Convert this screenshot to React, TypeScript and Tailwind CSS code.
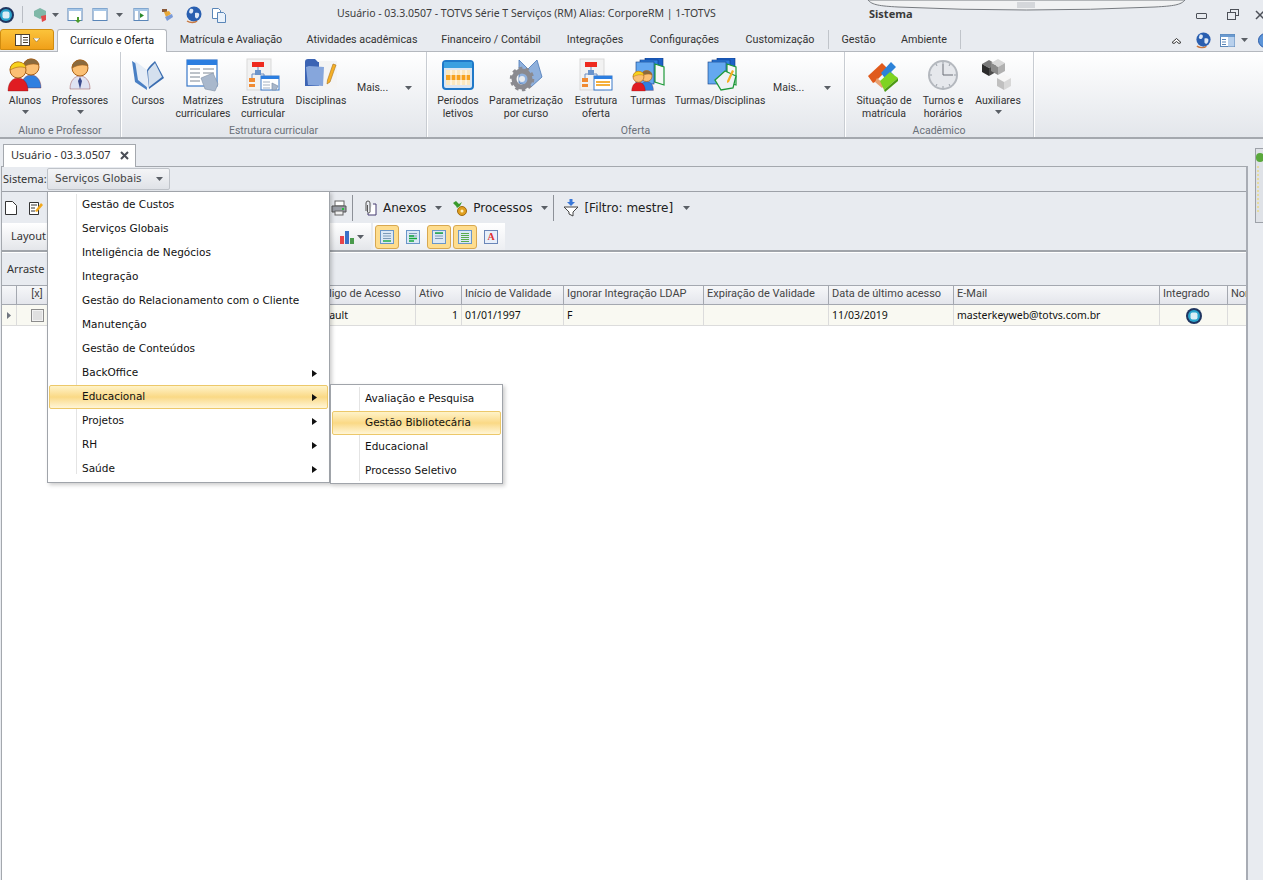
import React from 'react';

const Caret = ({ className = 'mx-auto' }: { className?: string }) => (
  <svg width="7" height="4" viewBox="0 0 7 4" className={className}>
    <path d="M0 0h7L3.500 4z" fill="#5a5f66" />
  </svg>
);

const Person = ({ x, y, hair, body, tie }: { x: number; y: number; hair: string; body: string; tie?: boolean }) => (
  <g transform={`translate(${x} ${y})`}>
    <path d="M1 30c0-9 5-13 10-13s10 4 10 13z" fill={body} stroke="#7a1010" strokeOpacity=".35" />
    {tie && <path d="M11 18l-2 4 2 8 2-8z" fill="#3a4a8c" />}
    <circle cx="11" cy="9" r="8" fill="#fbbf73" stroke="#a8621a" />
    <path d="M3.200 9C3 4 7 1 11 1s7.500 2 8 6C14 5 8 6 3.200 9z" fill={hair} stroke="#a8621a" strokeWidth=".6" />
  </g>
);

const AlunosIcon = () => (
  <svg width="36" height="34" viewBox="0 0 36 34">
    <Person x={13} y={0} hair="#8a6a3e" body="#2f7fe0" />
    <Person x={0} y={3} hair="#f7d21f" body="#e01c22" />
  </svg>
);
const ProfIcon = () => (
  <svg width="34" height="34" viewBox="0 0 34 34">
    <Person x={6} y={1} hair="#8a6a3e" body="#dfe2f2" tie />
  </svg>
);
const BookIcon = () => (
  <svg width="34" height="34" viewBox="0 0 34 34">
    <path d="M1 3l14 9 1 20L4 24z" fill="#4a80c4" />
    <path d="M4 3l12 9 1 18L7 22z" fill="#e4ecf6" />
    <path d="M16 12c2-4 6-7 8-9l9 17-15 11z" fill="#3a6db0" />
    <path d="M17 13c2-3 5-6 7-8l7 14-13 10z" fill="#d4e0ee" />
  </svg>
);
const MatrizIcon = () => (
  <svg width="34" height="34" viewBox="0 0 34 34">
    <rect x="1" y="2" width="30" height="26" fill="#fff" stroke="#3a78c8" strokeWidth="1.200" />
    <rect x="1" y="2" width="30" height="5" fill="#2c7ee0" />
    <path d="M4 11h10M4 15h10M4 19h10M4 23h10M17 11h11M17 15h11" stroke="#7c8794" />
    <path d="M15 20l12-5 5 11-3 7-10-2z" fill="#a9b8cc" stroke="#8090a6" strokeWidth=".6" />
  </svg>
);
const TreeIcon = ({ alt }: { alt?: boolean }) => (
  <svg width="34" height="34" viewBox="0 0 34 34">
    <rect x="1" y="1" width="24" height="31" fill="#f2f2f2" stroke="#d9d9d9" />
    <rect x="6" y="4" width="12" height="5" fill="#ee2a1e" />
    <path d="M12 9v5M6 20v-4h12v4" stroke="#6a8cc0" fill="none" />
    <rect x="9" y="12" width="6" height="5" fill="#6a94cc" />
    <rect x="3" y="20" width="6" height="4" fill="#f08a32" />
    <rect x="3" y="26" width="6" height="3" fill="#f08a32" />
    <rect x="15" y="18" width="18" height="14" fill="#fff" stroke="#3a78c8" />
    <rect x="15" y="18" width="18" height="3" fill="#2c7ee0" />
    {alt ? (
      <path d="M17 24h14M17 27h14" stroke="#f5b03c" strokeWidth="2" />
    ) : (
      <path d="M17 24h7M17 27h7M17 30h7M26 25l6 3-2 4h-4z" stroke="#8090a6" fill="#a9b8cc" strokeWidth=".7" />
    )}
  </svg>
);
const FolderIcon = () => (
  <svg width="34" height="34" viewBox="0 0 34 34">
    <path d="M1 4c0-2 1-3 3-3h7l3 3h12v24H1z" fill="#3c64b4" />
    <rect x="15" y="3" width="18" height="27" fill="#f4f4f4" />
    <path d="M2 9l3-1 15 1-1 19-15-1z" fill="#86a6dc" />
    <path d="M29 6l3 1-6 17-3 2 .5-4z" fill="#f5b026" stroke="#a8701a" strokeWidth=".6" />
  </svg>
);
const CalendarIcon = () => (
  <svg width="34" height="34" viewBox="0 0 34 34">
    <rect x="2" y="3" width="30" height="28" rx="3" fill="#dbe6f2" stroke="#1f78c8" strokeWidth="2" />
    <rect x="3" y="4" width="28" height="6" fill="#3aa0e0" />
    <rect x="5" y="12" width="24" height="5" fill="#fbe8bf" />
    <rect x="5" y="17" width="24" height="5" fill="#f7a21c" />
    <rect x="5" y="22" width="24" height="5" fill="#fbe8bf" />
    <path d="M10 12v15M15 12v15M20 12v15M25 12v15" stroke="#fff" />
  </svg>
);
const GearIcon = () => (
  <svg width="34" height="34" viewBox="0 0 34 34">
    <path d="M10 2l9 9 9-9 5 17-11 10-12-4z" fill="#8fb0dc" stroke="#4a78b8" strokeWidth=".8" />
    <circle cx="13" cy="21" r="8" fill="none" stroke="#8a8a90" strokeWidth="5" />
    <circle cx="13" cy="21" r="11" fill="none" stroke="#8a8a90" strokeWidth="2.500" strokeDasharray="3.500 3.400" />
    <circle cx="13" cy="21" r="3" fill="#e8eaee" />
  </svg>
);
const Stack = () => (
  <g>
    <rect x="14" y="0" width="18" height="22" fill="#1d62c8" stroke="#103a80" strokeWidth=".6" />
    <rect x="9" y="2" width="18" height="22" fill="#2f80e0" stroke="#103a80" strokeWidth=".6" />
    <rect x="5" y="4" width="18" height="22" fill="#64a8f0" stroke="#103a80" strokeWidth=".6" />
    <path d="M24 6l9 3v18l-9-3z" fill="#f7f7f7" stroke="#1e9a3a" strokeWidth="1.200" />
  </g>
);
const TurmasIcon = () => (
  <svg width="34" height="34" viewBox="0 0 34 34">
    <Stack />
    <g transform="translate(0 12) scale(.68)">
      <Person x={12} y={0} hair="#8a6a3e" body="#2f7fe0" />
      <Person x={0} y={1} hair="#f7d21f" body="#e01c22" />
    </g>
  </svg>
);
const TurmasDiscIcon = () => (
  <svg width="34" height="34" viewBox="0 0 34 34">
    <Stack />
    <path d="M12 22l10-9 11 5-3 12-12 2z" fill="#eef2f6" stroke="#1e9a3a" strokeWidth="1.300" />
    <path d="M24 23l5-11 2 1-5 11-2 1z" fill="#f5b026" />
  </svg>
);
const PuzzleIcon = () => (
  <svg width="34" height="34" viewBox="0 0 34 34">
    <path d="M1 18l14-13 6 6-13 13-2 1z" fill="#e05a1c" />
    <path d="M8 24l7 6 3-3-8-7z" fill="#e8a070" />
    <path d="M14 15l10-11 5 5-5 5 3 3-7 6z" fill="#2c82d8" />
    <path d="M13 23l10-9 8 6-14 12z" fill="#7ed321" />
    <path d="M17 32l14-12v3L18 34z" fill="#4c9a12" />
  </svg>
);
const ClockIcon = () => (
  <svg width="32" height="32" viewBox="0 0 32 32">
    <circle cx="16" cy="16" r="15" fill="#b4b8be" />
    <circle cx="16" cy="16" r="13" fill="#e6e8ec" />
    <path d="M16 5v11h10" stroke="#6a6e76" fill="none" />
    <path d="M16 3v2M16 27v2M3 16h2M27 16h2M9 5l1 2M23 5l-1 2M9 27l1-2M23 27l-1-2" stroke="#9aa0a8" />
  </svg>
);
const Cube = ({ x, y, c1, c2, c3 }: { x: number; y: number; c1: string; c2: string; c3: string }) => (
  <g transform={`translate(${x} ${y})`}>
    <path d="M7 0l7 4-7 4-7-4z" fill={c1} />
    <path d="M0 4l7 4v8l-7-4z" fill={c2} />
    <path d="M14 4L7 8v8l7-4z" fill={c3} />
  </g>
);
const CubesIcon = () => (
  <svg width="34" height="34" viewBox="0 0 34 34">
    <Cube x={1} y={2} c1="#7a7a7a" c2="#2c2c2c" c3="#4c4c4c" />
    <Cube x={10} y={1} c1="#d8d8d8" c2="#8a8a8a" c3="#b0b0b0" />
    <Cube x={16} y={16} c1="#f6f6f6" c2="#c0c0c0" c3="#d8d8d8" />
  </svg>
);

const Globe = ({ size = 18 }: { size?: number }) => (
  <svg width={size} height={size} viewBox="0 0 18 18">
    <circle cx="9" cy="8" r="7.500" fill="#2a5fb0" />
    <path d="M5 3c3-1 4 1 3 3S5 8 4 6zM10 7c3-1 5 0 4 3s-3 3-4 1z" fill="#dfe9f6" />
    <path d="M2 15c3 2 8 2 10 0" stroke="#c87840" strokeWidth="1.500" fill="none" />
  </svg>
);
const Logo = ({ size = 16 }: { size?: number }) => (
  <svg width={size} height={size} viewBox="0 0 16 16">
    <circle cx="8" cy="8" r="8" fill="#1f3560" />
    <circle cx="8" cy="8" r="6" fill="#2aa4cc" />
    <rect x="4.500" y="4.500" width="7" height="7" rx="2" fill="#dbeef6" />
  </svg>
);
const WinIcon = ({ children }: { children?: React.ReactNode }) => (
  <svg width="16" height="16" viewBox="0 0 16 16">
    <rect x="1" y="1.500" width="14" height="12" fill="#fff" stroke="#5a86b8" />
    <rect x="1" y="1.500" width="14" height="2.500" fill="#a8c8e8" />
    {children}
  </svg>
);
const GridIcon = ({ rows }: { rows: string }) => (
  <svg width="14" height="14" viewBox="0 0 14 14">
    <rect x=".5" y=".5" width="13" height="13" fill="#dbe8f6" stroke="#6a96c8" />
    <path d="M3 3.500h8M3 6h8M3 8.500h8" stroke="#7c9ab8" />
    <path d={rows} stroke="#14a83c" strokeWidth="1.400" />
  </svg>
);

const QuickBar = () => (
  <div className="flex items-center h-[29px] relative shrink-0">
    <div className="w-[22px] flex -ml-[2px] mr-[2px]"><Logo /></div>
    <div className="w-px h-[17px] bg-[#b9bdc4]" />
    <div className="ml-[9px] w-[16px]">
      <svg width="16" height="16" viewBox="0 0 16 16">
        <path d="M8 1l6 3v5l-6 3-6-3V4z" fill="#7fb8a8" />
        <path d="M9 9l5-1v5l-4 2z" fill="#e04a4a" />
      </svg>
    </div>
    <Caret className="ml-[4px]" />
    <div className="ml-[8px]">
      <WinIcon><path d="M10 10v3H8l3 3 3-3h-2v-3z" fill="#4a9a2c" /></WinIcon>
    </div>
    <div className="ml-[9px]"><WinIcon /></div>
    <Caret className="ml-[8px]" />
    <div className="ml-[10px]">
      <WinIcon><path d="M6 4v9" stroke="#5a86b8" /><path d="M7 6l4 2.500L7 11z" fill="#2c8a2c" /></WinIcon>
    </div>
    <div className="ml-[10px]">
      <svg width="16" height="16" viewBox="0 0 16 16">
        <path d="M3 2h5v3H3z" fill="#8a5a3a" />
        <path d="M5 5l5-1 2 3-5 3z" fill="#e8a83a" />
        <path d="M6 10l7-3 1 3-6 4z" fill="#7a9ad8" />
      </svg>
    </div>
    <div className="ml-[10px]"><Globe /></div>
    <div className="ml-[8px]">
      <svg width="16" height="16" viewBox="0 0 16 16">
        <path d="M1.500 1.500h6l2 2v8h-8z" fill="#fff" stroke="#5a86b8" />
        <path d="M6.500 5.500h6l2 2v8h-8z" fill="#eaf2fb" stroke="#5a86b8" />
      </svg>
    </div>
    <div className="absolute left-[337px] top-[6px] text-[#3c3c3c] whitespace-nowrap text-[10.5px]">
      Usuário - 03.3.0507 - TOTVS Série T Serviços (RM) Alias: CorporeRM | 1-TOTVS
    </div>
    <svg width="319" height="14" viewBox="0 0 319 14" className="absolute left-[867px] top-0">
      <path d="M1 0c4 5 12 6 30 7q128 6 257 0c18-1 26-2 30-7z" fill="#f1f2f3" stroke="#777b80" />
      <path d="M150 3h18M150 5h18M150 7h18" stroke="#b8bcc2" />
    </svg>
    <div className="absolute left-[869px] top-[6px] font-bold text-[#3a3a3a]">Sistema</div>
    <div className="absolute right-0 top-[9px] flex items-center">
      <div className="w-[11px] h-[6px] border border-[#4c5058] rounded-[1px] mr-[20px] mt-[2px]" />
      <svg width="12" height="11" viewBox="0 0 12 11" className="mr-[16px]">
        <rect x="3.500" y=".5" width="8" height="6" fill="none" stroke="#4c5058" />
        <rect x=".5" y="3.500" width="8" height="7" fill="#e8ebf0" stroke="#4c5058" />
      </svg>
      <svg width="10" height="10" viewBox="0 0 10 10" className="-mr-[2px]">
        <path d="M1 1l8 8M9 1L1 9" stroke="#4c5058" strokeWidth="1.500" />
      </svg>
    </div>
  </div>
);

const ribbonTabs = [
  { label: 'Matrícula e Avaliação', w: 'w-[128px]' },
  { label: 'Atividades acadêmicas', w: 'w-[134px]' },
  { label: 'Financeiro / Contábil', w: 'w-[124px]' },
  { label: 'Integrações', w: 'w-[84px]' },
  { label: 'Configurações', w: 'w-[95px]' },
  { label: 'Customização', w: 'w-[96px]' },
];

const TabBar = () => (
  <div className="flex h-[22px] relative shrink-0 font-['Roboto',sans-serif] text-[10.75px]">
    <div className="w-[54px] h-[21px] rounded-t-[3px] border border-[#d08c10] bg-gradient-to-b from-[#fbc33a] to-[#f0a018] flex items-center justify-center gap-[3px]">
      <svg width="15" height="12" viewBox="0 0 15 12">
        <rect x=".5" y=".5" width="14" height="11" fill="#fff" stroke="#4c4030" />
        <path d="M6 1v10M8 3.500h5M8 6h5M8 8.500h5" stroke="#4c4030" />
      </svg>
      <svg width="7" height="4" viewBox="0 0 7 4"><path d="M0 0h7L3.500 4z" fill="#fff" stroke="#7a5a10" strokeWidth=".5" /></svg>
    </div>
    <div className="ml-[3px] w-[110px] h-[23px] bg-white border border-b-0 border-[#b4b8be] rounded-t-[3px] flex items-center justify-center z-10 text-[#222]">
      Currículo e Oferta
    </div>
    {ribbonTabs.map((t) => (
      <div key={t.label} className={`${t.w} flex items-center justify-center text-[#333] whitespace-nowrap`}>{t.label}</div>
    ))}
    <div className="w-px h-[19px] bg-[#c0c4ca] mt-[1px]" />
    <div className="w-[59px] flex items-center justify-center text-[#333]">Gestão</div>
    <div className="w-[72px] flex items-center justify-center text-[#333]">Ambiente</div>
    <div className="w-px h-[19px] bg-[#c0c4ca] mt-[1px]" />
    <div className="absolute right-0 top-[2px] flex items-center h-[18px]">
      <svg width="11" height="7" viewBox="0 0 11 7" className="mr-[13px]">
        <path d="M1 5.500l4.500-4 4.500 4-2 1-2.500-2-2.500 2z" fill="#fff" stroke="#333" />
      </svg>
      <Globe size={17} />
      <div className="ml-[8px]">
        <svg width="15" height="13" viewBox="0 0 15 13">
          <rect x=".5" y=".5" width="14" height="12" fill="#fff" stroke="#5a86b8" />
          <rect x=".5" y=".5" width="14" height="2.500" fill="#6a9ad0" />
          <rect x="8" y="3" width="6.500" height="9.500" fill="#b8d0ec" />
          <path d="M2 5.500h4M2 8h4M2 10.500h4" stroke="#5a86b8" />
        </svg>
      </div>
      <Caret className="ml-[6px]" />
      <svg width="5" height="15" viewBox="0 0 5 15" className="ml-[10px]">
        <circle cx="7.500" cy="7.500" r="7" fill="#5c94d8" stroke="#2c5ca8" />
      </svg>
    </div>
  </div>
);

const RibbonItem = ({ w, icon, lines, caret }: { w: string; icon: React.ReactNode; lines: string[]; caret?: boolean }) => (
  <div className={`${w} flex flex-col items-center pt-[5px] text-[#333]`}>
    <div className="h-[35px] flex items-center justify-center">{icon}</div>
    <div className="mt-[2px] text-center whitespace-nowrap leading-[13px]">
      {lines.map((l) => (
        <div key={l}>{l}</div>
      ))}
    </div>
    {caret && <Caret className="mt-[3px]" />}
  </div>
);

const MaisItem = ({ w }: { w: string }) => (
  <div className={`${w} flex items-center h-[70px] pl-[5px] pt-[2px] text-[#333]`}>
    <span>Mais...</span>
    <Caret className="ml-auto mr-[5px]" />
  </div>
);

const RibbonGroup = ({ w, pl, label, children }: { w: string; pl: string; label: string; children: React.ReactNode }) => (
  <div className={`${w} shrink-0 h-full border-r border-[#c8ccd2] shadow-[1px_0_0_#fff] flex flex-col`}>
    <div className={`flex ${pl} h-[70px] shrink-0`}>{children}</div>
    <div className="text-center text-[#6a6f78] leading-[14px] mt-[2px]">{label}</div>
  </div>
);

const Ribbon = () => (
  <div className="flex h-[88px] shrink-0 bg-gradient-to-b from-white to-[#e3e6eb] border-t border-b-2 border-t-[#b4b8be] border-b-[#a4a8ae] font-['Roboto',sans-serif] text-[10.5px]">
    <RibbonGroup w="w-[121px]" pl="pl-[3px]" label="Aluno e Professor">
      <RibbonItem w="w-[44px]" icon={<AlunosIcon />} lines={['Alunos']} caret />
      <RibbonItem w="w-[66px]" icon={<ProfIcon />} lines={['Professores']} caret />
    </RibbonGroup>
    <RibbonGroup w="w-[306px]" pl="pl-[5px]" label="Estrutura curricular">
      <RibbonItem w="w-[44px]" icon={<BookIcon />} lines={['Cursos']} />
      <RibbonItem w="w-[66px]" icon={<MatrizIcon />} lines={['Matrizes', 'curriculares']} />
      <RibbonItem w="w-[54px]" icon={<TreeIcon />} lines={['Estrutura', 'curricular']} />
      <RibbonItem w="w-[62px]" icon={<FolderIcon />} lines={['Disciplinas']} />
      <MaisItem w="w-[65px]" />
    </RibbonGroup>
    <RibbonGroup w="w-[418px]" pl="pl-[5px]" label="Oferta">
      <RibbonItem w="w-[52px]" icon={<CalendarIcon />} lines={['Períodos', 'letivos']} />
      <RibbonItem w="w-[84px]" icon={<GearIcon />} lines={['Parametrização', 'por curso']} />
      <RibbonItem w="w-[56px]" icon={<TreeIcon alt />} lines={['Estrutura', 'oferta']} />
      <RibbonItem w="w-[48px]" icon={<TurmasIcon />} lines={['Turmas']} />
      <RibbonItem w="w-[96px]" icon={<TurmasDiscIcon />} lines={['Turmas/Disciplinas']} />
      <MaisItem w="w-[68px]" />
    </RibbonGroup>
    <RibbonGroup w="w-[189px]" pl="pl-[5px]" label="Acadêmico">
      <RibbonItem w="w-[68px]" icon={<PuzzleIcon />} lines={['Situação de', 'matrícula']} />
      <RibbonItem w="w-[50px]" icon={<ClockIcon />} lines={['Turnos e', 'horários']} />
      <RibbonItem w="w-[60px]" icon={<CubesIcon />} lines={['Auxiliares']} caret />
    </RibbonGroup>
  </div>
);

const ToolbarOne = () => (
  <div className="flex items-center h-[32px] text-[12px] border-t border-[#9da1a8] text-[#222] font-['DejaVu_Sans',sans-serif]">
    <div className="ml-[2px] w-[16px]">
      <svg width="14" height="16" viewBox="0 0 14 16">
        <path d="M1.500 1.500h7l4 4v9h-11z" fill="#fff" stroke="#333" />
      </svg>
    </div>
    <div className="ml-[8px]">
      <svg width="16" height="16" viewBox="0 0 16 16">
        <path d="M1.500 2.500h9v12h-9z" fill="#fff" stroke="#333" />
        <path d="M3 5h6M3 8h4M3 11h4" stroke="#333" />
        <path d="M7 11l6-8 2 2-6 7z" fill="#f2a81c" />
      </svg>
    </div>
    <div className="ml-[287px]">
      <svg width="16" height="16" viewBox="0 0 16 16">
        <rect x="4" y="1" width="9" height="5" fill="#fff" stroke="#666" />
        <path d="M1 6h14v6H1z" fill="#9a9ea6" stroke="#555" />
        <rect x="4" y="11" width="8" height="4" fill="#eee" stroke="#666" />
        <rect x="11" y="8" width="2" height="2" fill="#22c03c" />
      </svg>
    </div>
    <div className="ml-[5px] w-px h-[26px] bg-[#8d9198]" />
    <div className="ml-[9px]">
      <svg width="16" height="16" viewBox="0 0 16 16">
        <path d="M11 4h3v11H6v-2" fill="#fff" stroke="#443a70" />
        <path d="M4 11V3a2 2 0 0 1 4 0v9a1.300 1.300 0 0 1-2.500 0V5" fill="none" stroke="#555" />
      </svg>
    </div>
    <span className="ml-[5px]">Anexos</span>
    <Caret className="ml-[9px]" />
    <div className="ml-[10px]">
      <svg width="16" height="16" viewBox="0 0 16 16">
        <circle cx="10" cy="11" r="4.500" fill="#e0a020" stroke="#a06a10" />
        <circle cx="10" cy="11" r="1.500" fill="#fff0c0" />
        <path d="M1 3l3-2 3 3 3-2-2 4-3 2-1-2z" fill="#3a9a2c" />
      </svg>
    </div>
    <span className="ml-[5px]">Processos</span>
    <Caret className="ml-[9px]" />
    <div className="ml-[5px] w-px h-[26px] bg-[#8d9198]" />
    <div className="ml-[9px]">
      <svg width="16" height="18" viewBox="0 0 16 18">
        <path d="M1 8h14l-5 5v4l-4-2v-2z" fill="#fff" stroke="#444" />
        <path d="M6.500 0h3v3H12L8 7 4 3h2.500z" fill="#3a78d8" />
      </svg>
    </div>
    <span className="ml-[5px]">[Filtro: mestre]</span>
    <Caret className="ml-[10px]" />
  </div>
);

const HighlightBtn = ({ on, children }: { on?: boolean; children: React.ReactNode }) => (
  <div className={`w-[24px] h-[24px] flex items-center justify-center rounded-[3px] ${on ? 'bg-[#fedd8e] border border-[#d8a850]' : ''}`}>{children}</div>
);

const ToolbarTwo = () => (
  <div className="flex h-[29px] border-b-2 border-[#a0a4aa]">
    <div className="w-[45px] h-[27px] bg-gradient-to-b from-white to-[#e4e6ea] flex items-center pl-[9px] text-[#333]">Layout</div>
    <div className="ml-[283px] w-[41px] h-[27px] bg-gradient-to-b from-white to-[#e4e6ea] flex items-center pl-[9px]">
      <svg width="17" height="14" viewBox="0 0 17 14">
        <rect x="1" y="6" width="4" height="8" fill="#e8444a" />
        <rect x="6" y="1" width="4" height="13" fill="#3a70c8" />
        <rect x="11" y="8" width="4" height="6" fill="#4a9a4c" />
      </svg>
      <Caret className="ml-[1px]" />
    </div>
    <div className="ml-[2px] w-[132px] h-[27px] bg-gradient-to-b from-white to-[#eceef2] flex items-center pl-[2px] gap-[2px]">
      <HighlightBtn on><GridIcon rows="M3 11h8" /></HighlightBtn>
      <HighlightBtn><GridIcon rows="M3 6h5M3 8.500h8M3 11h5" /></HighlightBtn>
      <HighlightBtn on><GridIcon rows="M3 3h8" /></HighlightBtn>
      <HighlightBtn on>
        <svg width="14" height="14" viewBox="0 0 14 14">
          <rect x=".5" y=".5" width="13" height="13" fill="#dbe8f6" stroke="#6a96c8" />
          <path d="M3 3.500h8M3 5.500h8M3 7.500h8M3 9.500h8M3 11.500h8" stroke="#5aaa4c" />
        </svg>
      </HighlightBtn>
      <HighlightBtn>
        <div className="w-[14px] h-[14px] bg-[#e8effa] border border-[#6a86b8] text-[#e03030] font-bold text-[10px] leading-[12px] text-center font-['Liberation_Serif',serif]">A</div>
      </HighlightBtn>
    </div>
  </div>
);

type Col = { w: string; head: string; cell: string | null; center?: boolean; right?: boolean };

const columns: Col[] = [
  { w: 'w-[15px]', head: '', cell: null },
  { w: 'w-[41px]', head: '[x]', cell: 'check', center: true },
  { w: 'w-[251px]', head: '', cell: '' },
  { w: 'w-[107px]', head: 'Código de Acesso', cell: 'Default' },
  { w: 'w-[46px]', head: 'Ativo', cell: '1', right: true },
  { w: 'w-[102px]', head: 'Início de Validade', cell: '01/01/1997' },
  { w: 'w-[140px]', head: 'Ignorar Integração LDAP', cell: 'F' },
  { w: 'w-[125px]', head: 'Expiração de Validade', cell: '' },
  { w: 'w-[125px]', head: 'Data de último acesso', cell: '11/03/2019' },
  { w: 'w-[206px]', head: 'E-Mail', cell: 'masterkeyweb@totvs.com.br' },
  { w: 'w-[68px]', head: 'Integrado', cell: 'logo' },
  { w: 'w-[21px]', head: 'Nome', cell: '' },
];

const Grid = () => (
  <div className="bg-white overflow-hidden">
    <div className="flex h-[20px] border-y border-[#a4a8b0] bg-gradient-to-b from-[#f6f7f9] to-[#e4e6ec] text-[#444] font-['Roboto',sans-serif] text-[11px]">
      {columns.map((c, i) => (
        <div key={i} className={`${c.w} shrink-0 border-r border-[#a4a8b0] px-[3px] pb-[1px] flex items-center overflow-hidden whitespace-nowrap ${c.center ? 'justify-center' : ''}`}>
          {c.head}
        </div>
      ))}
    </div>
    <div className="flex h-[21px] bg-[#f9f9f2] border-b border-[#dcdcdc] text-[#111] text-[10.5px]">
      {columns.map((c, i) => (
        <div key={i} className={`${c.w} shrink-0 border-r border-[#dcdcdc] px-[3px] pt-[1px] flex items-center overflow-hidden whitespace-nowrap ${c.right ? 'justify-end' : ''} ${c.cell === 'check' || c.cell === 'logo' || c.cell === null ? 'justify-center' : ''}`}>
          {c.cell === null && <svg width="4" height="7" viewBox="0 0 4 7"><path d="M0 0l4 3.500L0 7z" fill="#707680" /></svg>}
          {c.cell === 'check' && <div className="w-[13px] h-[13px] border border-[#8c8c8c] bg-[#e0e0e0] shadow-[inset_0_0_0_1px_#f2f2f2]" />}
          {c.cell === 'logo' && <Logo />}
          {c.cell !== null && c.cell !== 'check' && c.cell !== 'logo' && c.cell}
        </div>
      ))}
    </div>
  </div>
);

const Chevron = () => (
  <svg width="5" height="7" viewBox="0 0 5 7" className="ml-auto">
    <path d="M0 0l5 3.500L0 7z" fill="#111" />
  </svg>
);

const MenuRow = ({ label, arrow, active }: { label: string; arrow?: boolean; active?: boolean }) => (
  <div className={`h-[24px] flex items-center text-[#111] rounded-[2px] border ${active ? 'bg-gradient-to-b from-[#fff3c8] via-[#fad985] to-[#fff5d6] border-[#ecc86a]' : 'border-transparent'}`}>
    <div className="w-[32px] shrink-0" />
    <span className="whitespace-nowrap">{label}</span>
    {arrow && <Chevron />}
    {arrow && <div className="w-[10px]" />}
  </div>
);

const mainMenu = [
  'Gestão de Custos',
  'Serviços Globais',
  'Inteligência de Negócios',
  'Integração',
  'Gestão do Relacionamento com o Cliente',
  'Manutenção',
  'Gestão de Conteúdos',
];
const subMenu = ['Avaliação e Pesquisa', 'Gestão Bibliotecária', 'Educacional', 'Processo Seletivo'];

const MainMenu = () => (
  <div className="absolute left-[47px] top-[191px] w-[283px] h-[292px] bg-white border border-[#a0a4aa] shadow-[2px_2px_4px_rgba(0,0,0,0.2)] p-[1px] z-20 text-[10.5px] font-['DejaVu_Sans',sans-serif]">
    <div className="absolute left-[28px] top-[2px] bottom-[8px] w-px bg-[#e4e4e4]" />
    <div className="relative">
      {mainMenu.map((m) => (
        <MenuRow key={m} label={m} />
      ))}
      <MenuRow label="BackOffice" arrow />
      <MenuRow label="Educacional" arrow active />
      <MenuRow label="Projetos" arrow />
      <MenuRow label="RH" arrow />
      <MenuRow label="Saúde" arrow />
    </div>
  </div>
);

const SubMenu = () => (
  <div className="absolute left-[330px] top-[384px] w-[173px] h-[100px] bg-white border border-[#a0a4aa] shadow-[2px_2px_4px_rgba(0,0,0,0.2)] px-[1px] pt-[2px] z-30 text-[10.5px] font-['DejaVu_Sans',sans-serif]">
    <div className="absolute left-[28px] top-[2px] bottom-[2px] w-px bg-[#e4e4e4]" />
    <div className="relative">
      {subMenu.map((m) => (
        <MenuRow key={m} label={m} active={m === 'Gestão Bibliotecária'} />
      ))}
    </div>
  </div>
);

const Workspace = () => (
  <div className="flex-1 flex flex-col min-h-0 pt-[5px]">
    <div className="ml-[3px] w-[133px] h-[23px] -mb-px z-10 bg-white border border-b-0 border-[#a4a8ae] flex items-center pl-[7px] pb-[1px] text-[#333]">
      <span>Usuário - 03.3.0507</span>
      <svg width="9" height="9" viewBox="0 0 9 9" className="ml-auto mr-[6px]">
        <path d="M1 1l7 7M8 1L1 8" stroke="#4a4e56" strokeWidth="2" />
      </svg>
    </div>
    <div className="ml-[1px] w-[1247px] flex-1 flex flex-col border-l border-t border-r-2 border-[#a4a8ae] border-r-[#a8acb4]">
      <div className="h-[24px] flex items-center pl-[1px] text-[#333]">
        <span className="w-[44px] shrink-0">Sistema:</span>
        <div className="w-[123px] h-[22px] rounded-[2px] border border-[#bfc3c9] bg-gradient-to-b from-[#f4f5f7] to-[#dfe2e7] flex items-center pl-[7px] text-[#444] text-[10.5px] font-['DejaVu_Sans',sans-serif]">
          Serviços Globais
          <Caret className="ml-auto mr-[6px]" />
        </div>
      </div>
      <ToolbarOne />
      <ToolbarTwo />
      <div className="h-[33px] flex items-center pl-[5px] text-[#333] border-t border-white whitespace-nowrap">Arraste a coluna aqui para agrupar</div>
      <Grid />
      <div className="flex-1 bg-white" />
    </div>
    <div className="absolute left-[1255px] top-[148px] w-[12px] h-[75px] border border-[#9da1a8] bg-[#dfe2e7] pt-[4px]">
      <div className="w-[8px] h-[9px] bg-[#5aa83c] rounded-full" />
      <div className="mt-[4px] ml-[1px] w-[3px] h-[46px] border-l-2 border-dotted border-[#e6dca0]" />
    </div>
  </div>
);

export default function App() {
  return (
    <div className="relative w-[1263px] h-[880px] overflow-hidden flex flex-col bg-[#e8ebf0] text-[11px] font-['Noto_Sans','Liberation_Sans',sans-serif]">
      <QuickBar />
      <TabBar />
      <Ribbon />
      <Workspace />
      <MainMenu />
      <SubMenu />
    </div>
  );
}
